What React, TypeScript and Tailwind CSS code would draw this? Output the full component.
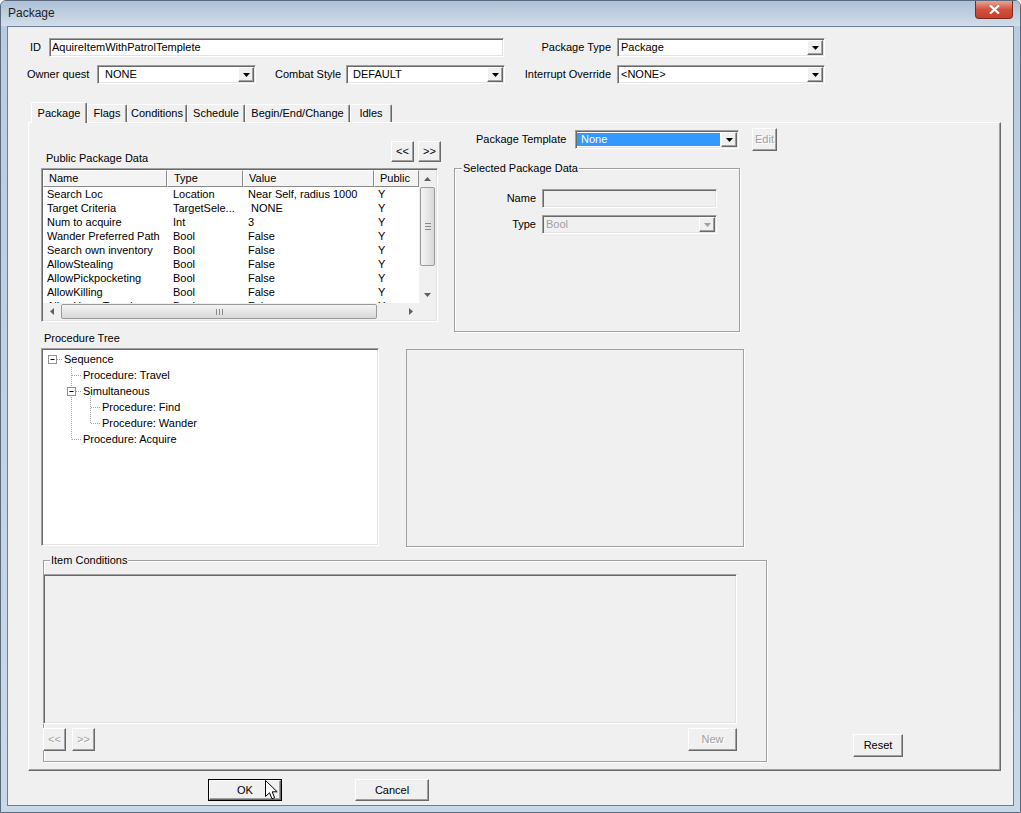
import React from "react";

// classic win32 3d edges
const sunken =
  "border border-t-[#a0a0a0] border-l-[#a0a0a0] border-r-white border-b-white shadow-[inset_1px_1px_0_#696969,inset_-1px_-1px_0_#e3e3e3] p-[1px]";
const raised =
  "border border-t-white border-l-white border-r-[#696969] border-b-[#696969] shadow-[inset_-1px_-1px_0_#a0a0a0] bg-[#f0f0f0]";
const grayText = "text-[#a0a0a0] [text-shadow:1px_1px_0_#fff]";

function DropBtn({ disabled }: { disabled?: boolean }) {
  return (
    <div className={`${raised} w-[16px] h-full flex items-center justify-center shrink-0`}>
      <svg width="7" height="4" viewBox="0 0 7 4">
        <polygon points="0,0 7,0 3.5,4" fill={disabled ? "#a0a0a0" : "#000"} />
      </svg>
    </div>
  );
}

function Combo({
  className = "",
  value,
  textClass = "pl-[2px]",
  disabled = false,
  selected = false,
}: {
  className?: string;
  value: string;
  textClass?: string;
  disabled?: boolean;
  selected?: boolean;
}) {
  return (
    <div className={`${sunken} ${className} h-[19px] flex ${disabled ? "bg-[#f0f0f0]" : "bg-white"}`}>
      <div className="flex-1 min-w-0 flex items-stretch">
        {selected ? (
          <div className="flex-1 my-[1px] mr-[1px] bg-[#3399ff] text-white flex items-center pl-[4px]">{value}</div>
        ) : (
          <div className={`flex-1 flex items-center whitespace-nowrap ${textClass} ${disabled ? "text-[#a0a0a0]" : ""}`}>
            {value}
          </div>
        )}
      </div>
      <DropBtn disabled={disabled} />
    </div>
  );
}

function Btn({ className = "", children, disabled }: { className?: string; children: React.ReactNode; disabled?: boolean }) {
  return (
    <div className={`${raised} ${className} flex items-center justify-center ${disabled ? grayText : ""}`}>
      {children}
    </div>
  );
}

function Arrow({ dir }: { dir: "up" | "down" | "left" | "right" }) {
  const pts = {
    up: "0,4 7,4 3.5,0",
    down: "0,0 7,0 3.5,4",
    left: "4,0 4,7 0,3.5",
    right: "0,0 0,7 4,3.5",
  }[dir];
  const vert = dir === "up" || dir === "down";
  return (
    <svg width={vert ? 7 : 4} height={vert ? 4 : 7} viewBox={vert ? "0 0 7 4" : "0 0 4 7"}>
      <polygon points={pts} fill="#606060" />
    </svg>
  );
}

const rows = [
  ["Search Loc", "Location", "Near Self, radius 1000", "Y"],
  ["Target Criteria", "TargetSele...", " NONE", "Y"],
  ["Num to acquire", "Int", "3", "Y"],
  ["Wander Preferred Path", "Bool", "False", "Y"],
  ["Search own inventory", "Bool", "False", "Y"],
  ["AllowStealing", "Bool", "False", "Y"],
  ["AllowPickpocketing", "Bool", "False", "Y"],
  ["AllowKilling", "Bool", "False", "Y"],
  ["AllowHomeTravel", "Bool", "False", "Y"],
];

const headCell =
  "h-[17px] flex items-center border border-t-white border-l-white border-r-[#8a8a8a] border-b-[#8a8a8a] bg-[#f4f4f4] whitespace-nowrap overflow-hidden";

function PackageList() {
  return (
    <div className={`${sunken} h-[154px] w-[397px] bg-white flex`}>
      <div className="w-[376px] flex flex-col">
        <div className="flex">
          <div className={`${headCell} w-[124px] pl-[5px]`}>Name</div>
          <div className={`${headCell} w-[76px] pl-[6px]`}>Type</div>
          <div className={`${headCell} w-[131px] pl-[5px]`}>Value</div>
          <div className={`${headCell} w-[45px] pl-[5px]`}>Public</div>
        </div>
        <div className="h-[116px] overflow-hidden">
          {rows.map((r) => (
            <div key={r[0]} className="flex h-[14px] items-center whitespace-pre">
              <div className="w-[124px] pl-[4px] overflow-hidden">{r[0]}</div>
              <div className="w-[76px] pl-[6px] overflow-hidden">{r[1]}</div>
              <div className="w-[131px] pl-[5px] overflow-hidden">{r[2]}</div>
              <div className="w-[45px] pl-[4px] overflow-hidden">{r[3]}</div>
            </div>
          ))}
        </div>
        {/* horizontal scrollbar */}
        <div className="h-[17px] flex bg-[#f0f0f0]">
          <div className="w-[17px] flex items-center justify-center">
            <Arrow dir="left" />
          </div>
          <div className="ml-[1px] my-[1px] w-[316px] rounded-[2px] border border-[#9a9a9a] bg-gradient-to-b from-[#f4f4f4] to-[#d9d9d9] flex items-center justify-center gap-[1px]">
            <div className="w-[1px] h-[6px] bg-[#8a8a8a]" />
            <div className="w-[1px] h-[6px] bg-[#8a8a8a] ml-[1px]" />
            <div className="w-[1px] h-[6px] bg-[#8a8a8a] ml-[1px]" />
          </div>
          <div className="flex-1" />
          <div className="w-[17px] flex items-center justify-center">
            <Arrow dir="right" />
          </div>
        </div>
      </div>
      <div className="w-[17px] flex flex-col">
        <div className="h-[133px] flex flex-col bg-[#f0f0f0]">
          <div className="h-[17px] flex items-center justify-center">
            <Arrow dir="up" />
          </div>
          <div className="h-[79px] mx-[1px] rounded-[2px] border border-[#9a9a9a] bg-gradient-to-r from-[#f4f4f4] to-[#d9d9d9] flex flex-col items-center justify-center gap-[1px]">
            <div className="w-[6px] h-[1px] bg-[#8a8a8a]" />
            <div className="w-[6px] h-[1px] bg-[#8a8a8a] mt-[1px]" />
            <div className="w-[6px] h-[1px] bg-[#8a8a8a] mt-[1px]" />
          </div>
          <div className="flex-1" />
          <div className="h-[17px] flex items-center justify-center">
            <Arrow dir="down" />
          </div>
        </div>
        <div className="flex-1 bg-[#f0f0f0]" />
      </div>
    </div>
  );
}

function ProcedureTree() {
  const items = [
    { t: "Sequence", cls: "pl-[21px]" },
    { t: "Procedure: Travel", cls: "pl-[40px]" },
    { t: "Simultaneous", cls: "pl-[40px]" },
    { t: "Procedure: Find", cls: "pl-[59px]" },
    { t: "Procedure: Wander", cls: "pl-[59px]" },
    { t: "Procedure: Acquire", cls: "pl-[40px]" },
  ];
  return (
    <div className={`${sunken} relative mt-[3px] h-[198px] w-[338px] bg-white`}>
      <svg className="absolute inset-0" width="334" height="194">
        <g stroke="#a0a0a0" strokeDasharray="1 1" fill="none">
          <line x1="15" y1="10.5" x2="21" y2="10.5" />
          <line x1="29.5" y1="18" x2="29.5" y2="90.5" />
          <line x1="30" y1="26.5" x2="39" y2="26.5" />
          <line x1="34" y1="42.5" x2="40" y2="42.5" />
          <line x1="48.5" y1="47" x2="48.5" y2="74.5" />
          <line x1="49" y1="58.5" x2="58" y2="58.5" />
          <line x1="49" y1="74.5" x2="58" y2="74.5" />
          <line x1="30" y1="90.5" x2="39" y2="90.5" />
        </g>
        <rect x="6.5" y="6.5" width="8" height="8" fill="#fff" stroke="#919191" />
        <line x1="8.5" y1="10.5" x2="12.5" y2="10.5" stroke="#000" />
        <rect x="25.5" y="38.5" width="8" height="8" fill="#fff" stroke="#919191" />
        <line x1="27.5" y1="42.5" x2="31.5" y2="42.5" stroke="#000" />
      </svg>
      <div className="relative pt-[1px]">
        {items.map((i) => (
          <div key={i.t} className={`h-[16px] leading-[16px] ${i.cls}`}>
            {i.t}
          </div>
        ))}
      </div>
    </div>
  );
}

function Tabs() {
  const tab =
    "mt-[2px] h-[18px] flex items-center justify-center border-t border-l border-white border-r border-r-[#696969] rounded-t-[2px] shadow-[inset_-1px_0_0_#a0a0a0] bg-[#f0f0f0]";
  return (
    <div className="mt-[18px] ml-[23px] h-[20px] flex relative z-10">
      <div className="w-[56px] h-[21px] flex items-center justify-center border-t border-l border-white border-r border-r-[#696969] rounded-t-[2px] shadow-[inset_-1px_0_0_#a0a0a0] bg-[#f0f0f0]">
        Package
      </div>
      <div className={`${tab} w-[40px]`}>Flags</div>
      <div className={`${tab} w-[60px]`}>Conditions</div>
      <div className={`${tab} w-[58px]`}>Schedule</div>
      <div className={`${tab} w-[105px]`}>Begin/End/Change</div>
      <div className={`${tab} w-[42px]`}>Idles</div>
    </div>
  );
}

export default function App() {
  return (
    <div className="w-[1021px] h-[813px] overflow-hidden bg-gradient-to-b from-[#b9cbe0] to-[#c9d9ea] border border-[#5a6b80] rounded-t-[6px] flex flex-col font-['Liberation_Sans',Arial,sans-serif] text-[11px] leading-[13px] text-black">
      {/* title bar */}
      <div className="h-[25px] flex items-start bg-gradient-to-b from-[#adc1d7] to-[#d2dde9]">
        <span className="ml-[7px] mt-[5px] text-[12px] leading-[14px] text-[#1e1e1e]">Package</span>
        <div className="ml-auto mr-[7px] w-[38px] h-[18px] rounded-b-[4px] border border-t-0 border-[#7a2a20] bg-gradient-to-b from-[#e7a496] via-[#d0503c] to-[#c7402c] flex items-center justify-center">
          <svg width="11" height="9" viewBox="0 0 11 9">
            <path d="M1 0.5 L10 8.5 M10 0.5 L1 8.5" stroke="#fff" strokeWidth="2.2" />
          </svg>
        </div>
      </div>

      {/* client */}
      <div className="mx-[6px] h-[780px] border border-[#6d7f96] bg-[#f0f0f0] flex flex-col">
        <div className="mt-[11px] flex items-center h-[19px]">
          <span className="ml-[22px] w-[19px]">ID</span>
          <div className={`${sunken} w-[455px] h-[19px] bg-white flex items-center`}>
            <span className="pl-[1px]">AquireItemWithPatrolTemplete</span>
          </div>
          <span className="w-[113px] text-right pr-[6px]">Package Type</span>
          <Combo className="w-[208px]" value="Package" textClass="pl-[2px]" />
        </div>

        <div className="mt-[8px] flex items-center h-[19px]">
          <span className="ml-[19px] w-[70px]">Owner quest</span>
          <Combo className="w-[159px]" value="NONE" textClass="pl-[6px]" />
          <span className="w-[90px] pl-[19px]">Combat Style</span>
          <Combo className="w-[159px]" value="DEFAULT" textClass="pl-[5px]" />
          <span className="w-[112px] text-right pr-[6px]">Interrupt Override</span>
          <Combo className="w-[208px]" value="<NONE>" textClass="pl-[2px]" />
        </div>

        <Tabs />

        {/* tab page */}
        <div className="ml-[20px] w-[973px] h-[649px] border border-t-white border-l-white border-r-[#696969] border-b-[#696969] shadow-[inset_-1px_-1px_0_#a0a0a0] flex flex-col">
          {/* top area */}
          <div className="mt-[5px] flex items-start">
            <div className="ml-[12px] w-[397px] flex flex-col">
              <div className="h-[40px] flex items-end">
                <span className="ml-[5px] mb-[3px]">Public Package Data</span>
                <div className="ml-auto -mr-[3px] mb-[6px] flex gap-[4px]">
                  <Btn className="w-[23px] h-[21px]">&lt;&lt;</Btn>
                  <Btn className="w-[23px] h-[21px]">&gt;&gt;</Btn>
                </div>
              </div>
              <PackageList />
            </div>

            <div className="ml-[16px] w-[323px] flex flex-col">
              <div className="h-[23px] flex items-center">
                <span className="pl-[22px] w-[121px]">Package Template</span>
                <Combo className="w-[164px]" value="None" selected />
                <Btn className="ml-[13px] w-[25px] h-[23px]" disabled>
                  Edit
                </Btn>
              </div>
              <div className="relative mt-[17px] w-[286px] h-[164px] border border-[#a0a0a0] shadow-[inset_1px_1px_0_#fff,1px_1px_0_#fff]">
                <span className="absolute left-[7px] -top-[7px] px-[1px] bg-[#f0f0f0]">Selected Package Data</span>
                <div className="mt-[20px] flex items-center">
                  <span className="w-[81px] text-right">Name</span>
                  <div className={`${sunken} ml-[6px] w-[175px] h-[19px] bg-[#f0f0f0]`} />
                </div>
                <div className="mt-[7px] flex items-center">
                  <span className="w-[81px] text-right">Type</span>
                  <Combo className="ml-[6px] w-[175px]" value="Bool" disabled textClass="pl-[2px]" />
                </div>
              </div>
            </div>
          </div>

          {/* tree area */}
          <div className="flex items-start">
            <div className="ml-[12px] w-[338px] flex flex-col">
              <span className="ml-[3px] h-[13px]">Procedure Tree</span>
              <ProcedureTree />
            </div>
            <div className="ml-[27px] mt-[17px] w-[338px] h-[198px] border border-[#a0a0a0] shadow-[1px_1px_0_#fff]" />
          </div>

          {/* item conditions */}
          <div className="mt-[13px] flex items-start">
            <div className="relative ml-[14px] w-[724px] h-[202px] border border-[#a0a0a0] shadow-[inset_1px_1px_0_#fff,1px_1px_0_#fff]">
              <span className="absolute left-[6px] -top-[7px] px-[1px] bg-[#f0f0f0]">Item Conditions</span>
              <div className={`${sunken} mt-[13px] -ml-[1px] w-[694px] h-[150px] bg-[#f0f0f0]`} />
              <div className="mt-[4px] -ml-[1px] w-[694px] flex">
                <Btn className="w-[23px] h-[23px]" disabled>
                  &lt;&lt;
                </Btn>
                <Btn className="ml-[6px] w-[23px] h-[23px]" disabled>
                  &gt;&gt;
                </Btn>
                <Btn className="ml-auto w-[49px] h-[23px]" disabled>
                  New
                </Btn>
              </div>
            </div>
            <Btn className="ml-[86px] mt-[174px] w-[50px] h-[23px]">Reset</Btn>
          </div>
        </div>

        {/* dialog buttons */}
        <div className="mt-[8px] ml-[200px] flex">
          <div className="relative w-[74px] h-[22px] border border-black">
            <Btn className="w-full h-full">OK</Btn>
            <svg className="absolute left-[56px] top-0" width="13" height="20" viewBox="0 0 13 20">
              <path d="M0.5 0.5 L0.5 16.5 L4.5 12.8 L7 18.8 L9.6 17.7 L7.2 11.8 L12.2 11.8 Z" fill="#fff" stroke="#000" strokeLinejoin="round" />
            </svg>
          </div>
          <Btn className="ml-[73px] w-[74px] h-[22px]">Cancel</Btn>
        </div>
      </div>
    </div>
  );
}
